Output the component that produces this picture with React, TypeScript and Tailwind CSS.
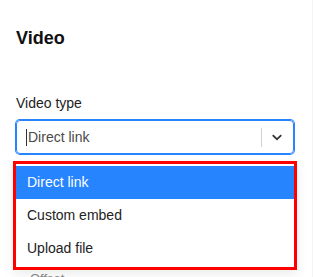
import { useState } from "react";

const options = ["Direct link", "Custom embed", "Upload file"];

export default function App() {
  const [selected] = useState(0);

  return (
    <div className="w-[315px] h-[277px] bg-white overflow-hidden font-['Liberation_Sans',Arial,sans-serif]">
      <div className="w-[313px] h-full border-r border-[#f4f4f4] pl-4 pr-[18px] pt-[26px]">
        <h2 className="text-[18px] leading-[24px] font-bold text-[#111]">Video</h2>

        <label className="block mt-[43px] text-[14px] leading-[20px] text-[#222]">Video type</label>

        <div className="relative mt-[7px]">
          <div className="h-[34px] flex items-center rounded-[4px] border border-[#2684FF] shadow-[0_0_0_1px_#2684FF]">
            <div className="flex-1 flex items-center pl-[9px] text-[14px] text-[#4a4a4a]">
              <span className="w-px h-[17px] bg-[#333] mr-px" />
              <span>Direct link</span>
            </div>
            <span className="w-px h-[19px] bg-[#d0d0d0]" />
            <div className="w-[31px] pr-[2px] flex items-center justify-center">
              <svg width="16" height="16" viewBox="0 0 20 20" fill="#333">
                <path d="M4.516 7.548c0.436-0.446 1.043-0.481 1.576 0l3.908 3.747 3.908-3.747c0.533-0.481 1.141-0.446 1.574 0 0.436 0.445 0.408 1.197 0 1.615-0.406 0.418-4.695 4.502-4.695 4.502-0.217 0.223-0.502 0.335-0.787 0.335s-0.57-0.112-0.789-0.335c0 0-4.287-4.084-4.695-4.502s-0.436-1.17 0-1.615z" />
              </svg>
            </div>
          </div>

          <div className="absolute left-[-3px] right-[-3px] top-[41px] z-10 border-[3px] border-[#ff0000] bg-white py-[2px] shadow-[0_4px_11px_rgba(0,0,0,0.08)]">
            {options.map((o, i) => (
              <div
                key={o}
                className={
                  i === selected
                    ? "h-[33px] flex items-center pl-[11px] text-[14px] bg-[#2684FF] text-white"
                    : "h-[33px] flex items-center pl-[11px] text-[14px] text-[#222]"
                }
              >
                {o}
              </div>
            ))}
          </div>
        </div>

        <p className="mt-[116px] pl-[14px] text-[13px] leading-[18px] text-[#888]">Offset</p>
      </div>
    </div>
  );
}
